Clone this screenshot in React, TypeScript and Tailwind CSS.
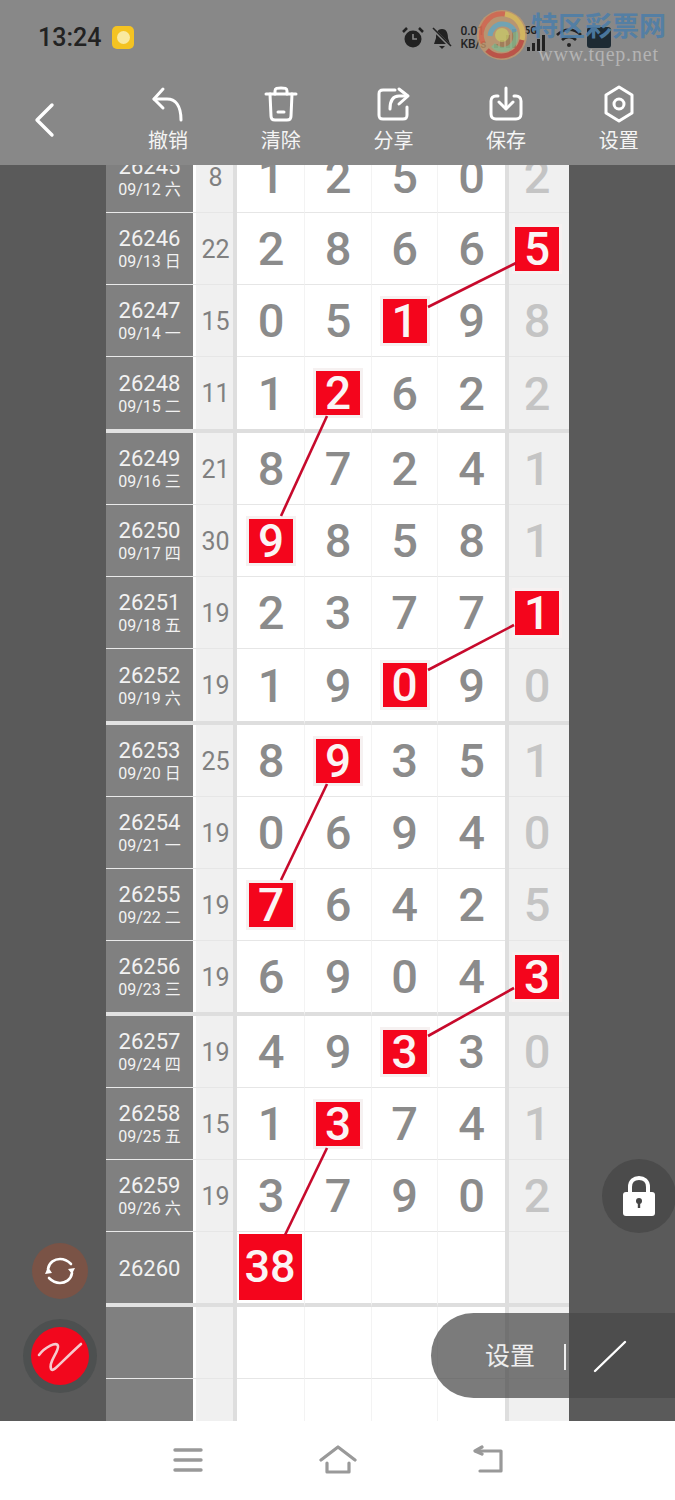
import React from "react";

type Row = { id: string; date?: string; sum?: string; d: string[]; red?: number; end?: boolean; big?: boolean; tall?: boolean };

const rows: Row[] = [
  { id: "26245", date: "09/12 六", sum: "8", d: ["1", "2", "5", "0", "2"] },
  { id: "26246", date: "09/13 日", sum: "22", d: ["2", "8", "6", "6", "5"], red: 4 },
  { id: "26247", date: "09/14 一", sum: "15", d: ["0", "5", "1", "9", "8"], red: 2 },
  { id: "26248", date: "09/15 二", sum: "11", d: ["1", "2", "6", "2", "2"], red: 1, end: true, big: true },
  { id: "26249", date: "09/16 三", sum: "21", d: ["8", "7", "2", "4", "1"] },
  { id: "26250", date: "09/17 四", sum: "30", d: ["9", "8", "5", "8", "1"], red: 0 },
  { id: "26251", date: "09/18 五", sum: "19", d: ["2", "3", "7", "7", "1"], red: 4 },
  { id: "26252", date: "09/19 六", sum: "19", d: ["1", "9", "0", "9", "0"], red: 2, end: true, big: true },
  { id: "26253", date: "09/20 日", sum: "25", d: ["8", "9", "3", "5", "1"], red: 1 },
  { id: "26254", date: "09/21 一", sum: "19", d: ["0", "6", "9", "4", "0"] },
  { id: "26255", date: "09/22 二", sum: "19", d: ["7", "6", "4", "2", "5"], red: 0 },
  { id: "26256", date: "09/23 三", sum: "19", d: ["6", "9", "0", "4", "3"], red: 4, end: true },
  { id: "26257", date: "09/24 四", sum: "19", d: ["4", "9", "3", "3", "0"], red: 2 },
  { id: "26258", date: "09/25 五", sum: "15", d: ["1", "3", "7", "4", "1"], red: 1 },
  { id: "26259", date: "09/26 六", sum: "19", d: ["3", "7", "9", "0", "2"] },
  { id: "26260", d: ["38", "", "", "", ""], red: 0, end: true, tall: true },
  { id: "", d: ["", "", "", "", ""] },
  { id: "", d: ["", "", "", "", ""] },
];

const cols = ["w-[68px] pl-[1px]", "w-[67px]", "w-[66px]", "w-[67px]"];

function Digit({ v, red, last, wide }: { v: string; red: boolean; last?: boolean; wide?: boolean }) {
  if (red) {
    return (
      <span
        className={
          wide
            ? "-translate-y-px flex h-[66px] w-[63px] -translate-x-px items-center justify-center bg-[#f4051c] text-[45px] font-medium leading-none text-[#fbf4f4]"
            : "flex h-[44px] w-[44px] items-center justify-center bg-[#f4051c] text-[46px] font-medium leading-none text-[#fbf4f4] shadow-[0_0_0_3px_#f6f1f1]"
        }
      >
        {v}
      </span>
    );
  }
  return <span className={`text-[47px] font-medium leading-none ${last ? "text-[#c4c4c4]" : "text-[#8b8b8b]"}`}>{v}</span>;
}

function TableRow({ r }: { r: Row }) {
  const bb = r.end ? "border-b-4 border-[#dedede]" : "border-b border-[#e6e6e6]";
  const h = r.big ? "h-[76px]" : r.end ? "h-[75px]" : "h-[72px]";
  return (
    <div className={`flex ${h} shrink-0`}>
      <div
        className={`flex w-[87px] flex-col items-center justify-center bg-[#808080] pt-[2px] text-[#f2f2f2] ${
          r.end ? "border-b-4 border-[#e2e2e2]" : "border-b border-[#eaeaea]"
        }`}
      >
        {r.id && <span className="text-[22px] leading-[25px]">{r.id}</span>}
        {r.date && <span className="text-[16px] leading-[22px]">{r.date}</span>}
      </div>
      <div className={`w-[3px] bg-white ${bb}`} />
      <div className={`flex w-[37px] items-center justify-center bg-[#f0f0f0] pl-[2px] pt-[2px] text-[25px] text-[#808080] ${bb}`}>
        {r.sum}
      </div>
      <div className="w-[4px] bg-[#dedede]" />
      {cols.map((c, i) => (
        <div
          key={i}
          className={`flex ${c} items-center justify-center bg-white ${i < 3 ? "border-r border-r-[#f3f3f3]" : ""} ${bb}`}
        >
          <Digit v={r.d[i]} red={r.red === i} wide={r.tall} />
        </div>
      ))}
      <div className="w-[4px] bg-[#dedede]" />
      <div className={`flex w-[60px] items-center justify-center bg-[#f0f0f0] pr-[4px] ${bb}`}>
        <Digit v={r.d[4]} red={r.red === 4} last />
      </div>
    </div>
  );
}

function Action({ label, children }: { label: string; children: React.ReactNode }) {
  return (
    <div className="flex w-[113px] flex-col items-center pt-[10px]">
      <svg width="40" height="40" viewBox="0 0 40 40" fill="none" stroke="#fff" strokeWidth="3" strokeLinecap="round" strokeLinejoin="round">
        {children}
      </svg>
      <span className="mt-[4px] text-[20px] leading-[26px] text-[#f4f4f4]">{label}</span>
    </div>
  );
}

const lines = [
  [516, 263, 428, 307],
  [327, 416, 281, 516],
  [514, 625, 428, 670],
  [327, 784, 281, 880],
  [514, 988, 428, 1036],
  [327, 1148, 285, 1235],
];

export default function App() {
  return (
    <div
      className="relative flex h-[1500px] w-[675px] flex-col overflow-hidden bg-white"
      style={{ fontFamily: 'Roboto, "Noto Sans CJK SC", sans-serif' }}
    >
      {/* header */}
      <header className="relative z-10 h-[165px] shrink-0 bg-[#888888]">
        <div className="flex h-[74px] items-center pl-[38px] pt-[1px]">
          <span className="text-[25px] font-medium text-[#222]">13:24</span>
          <span className="ml-[11px] flex h-[23px] w-[22px] items-center justify-center rounded-[5px] bg-[#f4c322]">
            <span className="h-[13px] w-[13px] rounded-full bg-[#f9e9a0]" />
          </span>
          {/* status icons */}
          <svg className="ml-[267px]" width="24" height="24" viewBox="0 0 24 24" fill="#222">
            <circle cx="12" cy="13" r="8.5" />
            <path d="M2 6 L6 2 M22 6 L18 2" stroke="#222" strokeWidth="2.5" />
            <path d="M12 8 V13 H16" stroke="#888" strokeWidth="1.6" fill="none" />
          </svg>
          <svg className="ml-[6px]" width="22" height="24" viewBox="0 0 22 24" fill="#222">
            <path d="M11 3 C6 3 5 8 5 12 L3 18 H19 L17 12 C17 8 16 3 11 3 Z" />
            <path d="M8 20 H14 L11 23 Z" />
            <path d="M2 3 L20 21" stroke="#888" strokeWidth="3" />
            <path d="M2 2 L20 20" stroke="#222" strokeWidth="1.6" />
          </svg>
          <span className="ml-[7px] flex w-[32px] flex-col text-[12px] font-medium leading-[13px] text-[#222]">
            <span>0.01</span>
            <span>KB/s</span>
          </span>
          <svg className="ml-[1px]" width="25" height="24" viewBox="0 0 25 24" fill="#222">
            <rect x="1" y="18" width="4" height="4" />
            <rect x="7" y="14" width="4" height="8" />
            <rect x="13" y="9" width="4" height="13" />
            <rect x="19" y="3" width="4" height="19" />
          </svg>
          <span className="mb-[14px] ml-[6px] text-[10px] font-bold leading-none text-[#222]">5G</span>
          <svg className="-ml-[11px] mt-[8px]" width="24" height="22" viewBox="0 0 24 22" fill="#222">
            <rect x="1" y="16" width="3" height="4" />
            <rect x="6" y="12" width="3" height="8" />
            <rect x="11" y="8" width="3" height="12" />
            <rect x="16" y="4" width="3" height="16" />
          </svg>
          <svg className="ml-[5px]" width="28" height="22" viewBox="0 0 28 22" fill="none" stroke="#222" strokeWidth="2.6">
            <path d="M2 8 C9 1 19 1 26 8" />
            <path d="M7 13 C11 9 17 9 21 13" />
            <circle cx="14" cy="18" r="2" fill="#222" stroke="none" />
          </svg>
          <span className="ml-[4px] h-[21px] w-[24px] rounded-[3px] bg-[#1d2a33]" />
        </div>
        <div className="flex">
          <div className="flex w-[112px] items-start pl-[32px] pt-[28px]">
            <svg width="24" height="36" viewBox="0 0 24 36" fill="none" stroke="#fff" strokeWidth="3.4" strokeLinecap="round" strokeLinejoin="round">
              <path d="M20 3 L5 18 L20 33" />
            </svg>
          </div>
          <Action label="撤销">
            <path d="M15 5 L6 15 L15 24" />
            <path d="M6 15 H19 C27 15 33 21 33 36" />
          </Action>
          <Action label="清除">
            <path d="M5 10 H35" />
            <path d="M14 10 V7 C14 4 16 4 20 4 C24 4 26 4 26 7 V10" />
            <path d="M9 10 L10 32 C10 35 12 36 14 36 H26 C28 36 30 35 30 32 L31 10" />
            <path d="M17 28 H23" />
          </Action>
          <Action label="分享">
            <path d="M22 6 H10 C7 6 6 7 6 10 V31 C6 34 7 35 10 35 H30 C33 35 34 34 34 31 V23" />
            <path d="M26 5 L35 12 L26 20" />
            <path d="M34 12 H26 C20 12 17 16 17 25" />
          </Action>
          <Action label="保存">
            <path d="M12 12 H10 C7 12 5 14 5 17 V30 C5 33 7 35 10 35 H30 C33 35 35 33 35 30 V17 C35 14 33 12 30 12 H28" />
            <path d="M20 4 V24" />
            <path d="M13 18 L20 25 L27 18" />
          </Action>
          <Action label="设置">
            <path d="M20 3 L33 11 V29 L20 37 L7 29 V11 Z" />
            <circle cx="20" cy="20" r="5" />
          </Action>
        </div>
      </header>

      {/* watermark */}
      <div className="absolute left-[475px] top-[8px] z-20 flex">
        <svg width="54" height="54" viewBox="0 0 54 54" fill="none" strokeWidth="5" opacity="0.9">
          <circle cx="27" cy="27" r="25" fill="#c79a6c" stroke="none" opacity="0.85" />
          <path d="M8 35 A21 21 0 0 1 30 6" stroke="#d56a50" />
          <path d="M30 6 A21 21 0 0 1 47 32" stroke="#d9b95c" />
          <path d="M47 32 A21 21 0 0 1 12 42" stroke="#c04f43" />
          <path d="M15 28 A13 13 0 0 1 40 24" stroke="#6fa6b8" />
          <path d="M40 24 A13 13 0 0 1 18 37" stroke="#8fb58a" />
          <circle cx="27" cy="27" r="7" fill="#c9c26a" />
        </svg>
        <div className="ml-[2px] mt-[4px] flex flex-col items-center">
          <span className="text-[27px] font-bold leading-[30px] text-[#4f7fa8] opacity-90">特区彩票网</span>
          <span className="mt-[1px] text-[20px] leading-[22px] tracking-[0.8px] text-[#b4b4b4]" style={{ fontFamily: '"Liberation Serif", serif' }}>
            www.tqep.net
          </span>
        </div>
      </div>

      {/* board */}
      <main className="relative flex h-[1256px] shrink-0 overflow-hidden">
        <div className="w-[106px] shrink-0 bg-[#5a5a5a]" />
        <div className="-mt-[24px] flex w-[463px] shrink-0 flex-col">
          {rows.map((r, i) => (
            <TableRow key={i} r={r} />
          ))}
        </div>
        <div className="flex-1 bg-[#5a5a5a]" />
      </main>

      {/* connecting lines */}
      <svg className="pointer-events-none absolute left-0 top-0" width="675" height="1500">
        {lines.map(([a, b, c, d], i) => (
          <line key={i} x1={a} y1={b} x2={c} y2={d} stroke="#c70a2c" strokeWidth="2.6" />
        ))}
      </svg>

      {/* floating tools */}
      <div className="absolute left-[32px] top-[1243px] flex h-[56px] w-[56px] items-center justify-center rounded-full bg-[#7a5346]">
        <svg width="34" height="34" viewBox="0 0 34 34" fill="none" stroke="#fff" strokeWidth="2.6" strokeLinecap="round">
          <path d="M5 15 C6 8 12 5 17 5 C22 5 25 7 28 10" />
          <path d="M29 19 C28 26 22 29 17 29 C12 29 9 27 6 24" />
          <path d="M25 15 L32 14 L29 20 Z" fill="#fff" stroke="none" />
          <path d="M2 20 L9 19 L5 13 Z" fill="#fff" stroke="none" />
        </svg>
      </div>
      <div className="absolute left-[23px] top-[1319px] flex h-[74px] w-[74px] items-center justify-center rounded-full bg-[#4d5050]">
        <div className="flex h-[58px] w-[58px] items-center justify-center rounded-full bg-[#f2071d]">
          <svg width="48" height="40" viewBox="0 0 48 40" fill="none" stroke="#f6c9cd" strokeWidth="2.6" strokeLinecap="round" strokeLinejoin="round">
            <path d="M3 19 C9 11 21 5 22 10 C23 16 12 26 15 33 C17 37 24 27 45 8" />
          </svg>
        </div>
      </div>
      <div className="absolute left-[602px] top-[1159px] flex h-[74px] w-[74px] items-center justify-center rounded-full bg-[#4b4b4b]">
        <svg width="34" height="42" viewBox="0 0 34 42" fill="none">
          <path d="M8 18 V12 C8 6 12 3 17 3 C22 3 26 6 26 12 V18" stroke="#fff" strokeWidth="4" />
          <rect x="1" y="17" width="32" height="24" rx="3" fill="#fff" />
          <circle cx="17" cy="26" r="3" fill="#444" />
          <rect x="15.8" y="27" width="2.4" height="6" fill="#444" />
        </svg>
      </div>
      <div className="absolute left-[431px] top-[1313px] flex h-[85px] w-[244px] items-center rounded-l-[43px] bg-[#484848]/72 pl-[54px] pt-[2px]">
        <span className="text-[25px] leading-none text-[#eeeeee]">设置</span>
        <span className="ml-[29px] h-[26px] w-[2px] bg-[#eeeeee]" />
        <svg className="ml-[27px]" width="34" height="34" viewBox="0 0 34 34" stroke="#fff" strokeWidth="2.4" strokeLinecap="round">
          <path d="M2 31 L32 2" />
        </svg>
      </div>

      {/* system nav */}
      <nav className="relative flex flex-1 items-center bg-white pb-[2px] pl-[172px]">
        <svg width="32" height="26" viewBox="0 0 32 26" stroke="#999" strokeWidth="3.4" strokeLinecap="round">
          <path d="M3 3 H29 M3 13 H29 M3 23 H29" />
        </svg>
        <svg className="ml-[115px]" width="38" height="30" viewBox="0 0 38 30" fill="none" stroke="#999" strokeWidth="3.2" strokeLinecap="round" strokeLinejoin="round">
          <path d="M2 15 L19 2 L36 15" />
          <path d="M8 18 V27 H30 V18" />
        </svg>
        <svg className="ml-[115px]" width="34" height="30" viewBox="0 0 34 30" fill="none" stroke="#999" strokeWidth="3.2" strokeLinecap="round" strokeLinejoin="round">
          <path d="M10 2 L3 6 L10 9" />
          <path d="M4 6 H29 V26 H8" />
        </svg>
      </nav>
    </div>
  );
}
